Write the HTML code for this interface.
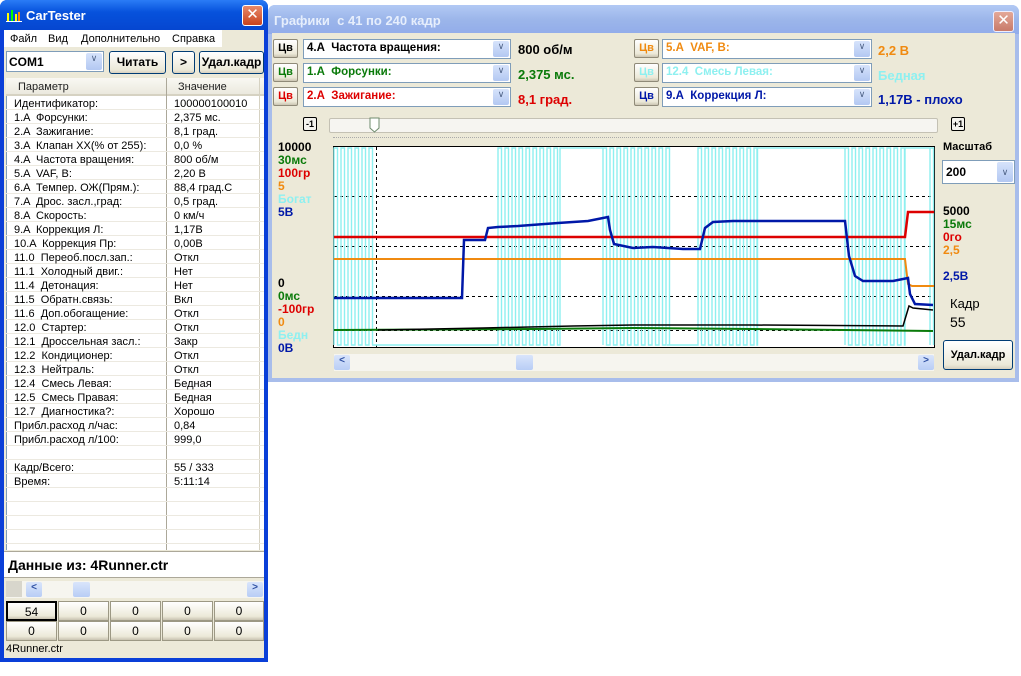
<!DOCTYPE html>
<html><head><meta charset="utf-8">
<style>
*{margin:0;padding:0;box-sizing:border-box}
body{width:1021px;height:676px;background:#fff;position:relative;overflow:hidden;font-family:"Liberation Sans","DejaVu Sans",sans-serif;font-size:11px;color:#000}
.a{position:absolute}
.win1{left:0;top:0;width:268px;height:662px;background:#0a3fd8;border-radius:7px 7px 0 0}
.t1{left:0;top:0;width:268px;height:30px;background:linear-gradient(#2a7cf6,#0752dc 40%,#0546d0);border-radius:7px 7px 0 0;color:#fff;font-weight:bold;font-size:13px;padding:8px 0 0 26px}
.xbtn{width:21px;height:21px;background:linear-gradient(#e8896a,#c9431d);border:1px solid #fff;border-radius:3px;color:#fff;font-weight:bold;font-size:15px;text-align:center;line-height:18px}
.body1{left:4px;top:30px;width:260px;height:628px;background:#ece9d8}
.btn{position:absolute;background:linear-gradient(#fff,#ece9d8 85%,#d6d0c0);border:1px solid #003c74;border-radius:3px;font-weight:bold;font-size:12px;text-align:center}
.combo{position:absolute;background:#fff;border:1px solid #7f9db9}
.dd{position:absolute;right:1px;top:1px;bottom:1px;width:16px;background:linear-gradient(#d6e3fb,#b3c8f2);border-radius:2px;color:#4d6185;font-size:9px;text-align:center}
.cell{position:absolute;height:20px;background:linear-gradient(#fff,#ece9d8 80%,#c8c2b0);border:1px solid #9c9884;text-align:center;line-height:18px;font-size:12px}
.win2{left:268px;top:5px;width:751px;height:377px;background:#a8bdeb;border-radius:7px 7px 0 0}
.t2{left:268px;top:5px;width:751px;height:29px;background:linear-gradient(#b2c9f4,#9cb6ea 50%,#92acea);border-radius:7px 7px 0 0;color:#e6eefc;font-weight:bold;font-size:13px;padding:8px 0 0 6px}
.body2{left:272px;top:33px;width:743px;height:345px;background:#ece9d8}
.cv{position:absolute;width:25px;height:19px;background:linear-gradient(#fff,#ece9d8 80%,#cbc5b2);border:1px solid #8f8a78;border-radius:2px;font-weight:bold;font-size:11px;text-align:center;line-height:17px}
.b{font-weight:bold}
.lbl{position:absolute;font-weight:bold;font-size:12px;line-height:13px}
</style></head><body>

<div class="a win1"></div>
<div class="a t1">CarTester</div>
<svg class="a" style="left:6px;top:8px" width="16" height="15"><rect x="1" y="5" width="2" height="9" fill="#ff0"/><rect x="5" y="2" width="2" height="12" fill="#0f0"/><rect x="9" y="6" width="2" height="8" fill="#ff0"/><rect x="12" y="4" width="2" height="10" fill="#f80"/><rect x="0" y="13" width="16" height="1" fill="#fff"/></svg>
<div class="a xbtn" style="left:242px;top:5px">✕</div>
<div class="a body1"></div>
<div class="a" style="left:4px;top:30px;width:218px;height:17px;background:#fff"></div>
<div class="a" style="left:10px;top:33px">Файл</div>
<div class="a" style="left:48px;top:33px">Вид</div>
<div class="a" style="left:81px;top:33px">Дополнительно</div>
<div class="a" style="left:172px;top:33px">Справка</div>
<div class="combo" style="left:6px;top:51px;width:98px;height:21px"><span class="b" style="position:absolute;left:2px;top:3px;font-size:12px">COM1</span><div class="dd">&#8744;</div></div>
<div class="btn" style="left:109px;top:51px;width:57px;height:23px;line-height:21px">Читать</div>
<div class="btn" style="left:172px;top:51px;width:23px;height:23px;line-height:21px">&gt;</div>
<div class="btn" style="left:199px;top:51px;width:65px;height:23px;line-height:21px">Удал.кадр</div>
<div class="a" style="left:6px;top:78px;width:258px;height:472px;background:#fff;border-left:1px solid #7f9db9"></div>
<div class="a" style="left:6px;top:78px;width:258px;height:18px;background:linear-gradient(#f9f8f3,#ebe9de);border-bottom:2px solid #d6d2c2"></div>
<div class="a" style="left:18px;top:81px;color:#222">Параметр</div>
<div class="a" style="left:178px;top:81px;color:#222">Значение</div>
<div class="a" style="left:166px;top:78px;width:1px;height:472px;background:#aca899"></div>
<div class="a" style="left:259px;top:78px;width:1px;height:472px;background:#d6d2c2"></div>
<svg class="a" style="left:6px;top:96px" width="258" height="454">
<path stroke="#ece9e0" d="M0 13.5H258M0 27.5H258M0 41.5H258M0 55.5H258M0 69.5H258M0 83.5H258M0 97.5H258M0 111.5H258M0 125.5H258M0 139.5H258M0 153.5H258M0 167.5H258M0 181.5H258M0 195.5H258M0 209.5H258M0 223.5H258M0 237.5H258M0 251.5H258M0 265.5H258M0 279.5H258M0 293.5H258M0 307.5H258M0 321.5H258M0 335.5H258M0 349.5H258M0 363.5H258M0 377.5H258M0 391.5H258M0 405.5H258M0 419.5H258M0 433.5H258M0 447.5H258"/>
</svg>
<div class="a" style="left:6px;top:97px;width:258px;font-size:11px;line-height:14px">
<div style="position:absolute;left:8px;top:0;white-space:pre">Идентификатор:
1.A  Форсунки:
2.A  Зажигание:
3.A  Клапан XX(% от 255):
4.A  Частота вращения:
5.A  VAF, B:
6.A  Темпер. ОЖ(Прям.):
7.A  Дрос. засл.,град:
8.A  Скорость:
9.A  Коррекция Л:
10.A  Коррекция Пр:
11.0  Переоб.посл.зап.:
11.1  Холодный двиг.:
11.4  Детонация:
11.5  Обратн.связь:
11.6  Доп.обогащение:
12.0  Стартер:
12.1  Дроссельная засл.:
12.2  Кондиционер:
12.3  Нейтраль:
12.4  Смесь Левая:
12.5  Смесь Правая:
12.7  Диагностика?:
Прибл.расход л/час:
Прибл.расход л/100:

Кадр/Всего:
Время:</div>
<div style="position:absolute;left:168px;top:0;white-space:pre">100000100010
2,375 мс.
8,1 град.
0,0 %
800 об/м
2,20 B
88,4 град.C
0,5 град.
0 км/ч
1,17B
0,00B
Откл
Нет
Нет
Вкл
Откл
Откл
Закр
Откл
Откл
Бедная
Бедная
Хорошо
0,84
999,0

55 / 333
5:11:14</div>
</div>
<div class="a" style="left:4px;top:551px;width:260px;height:27px;background:#fff;border-top:1px solid #aca899;border-bottom:1px solid #aca899"></div>
<div class="a b" style="left:8px;top:557px;font-size:14px">Данные из: 4Runner.ctr</div>
<div class="a" style="left:6px;top:581px;width:258px;height:17px;background:#f6f5ef"></div>
<div class="a" style="left:6px;top:581px;width:16px;height:16px;background:#d8d6cc"></div>
<div class="a" style="left:26px;top:582px;width:16px;height:15px;background:linear-gradient(#d9e5fb,#b8cdf5);border-radius:2px;color:#2d4fa2;font-size:10px;text-align:center;font-weight:bold">&lt;</div>
<div class="a" style="left:73px;top:582px;width:17px;height:15px;background:linear-gradient(#d9e5fb,#b8cdf5);border-radius:2px"></div>
<div class="a" style="left:247px;top:582px;width:16px;height:15px;background:linear-gradient(#d9e5fb,#b8cdf5);border-radius:2px;color:#2d4fa2;font-size:10px;text-align:center;font-weight:bold">&gt;</div>
<div class="cell" style="left:6px;top:601px;width:51px;border:2px solid #000">54</div>
<div class="cell" style="left:58px;top:601px;width:51px">0</div>
<div class="cell" style="left:110px;top:601px;width:51px">0</div>
<div class="cell" style="left:162px;top:601px;width:51px">0</div>
<div class="cell" style="left:214px;top:601px;width:50px">0</div>
<div class="cell" style="left:6px;top:621px;width:51px">0</div>
<div class="cell" style="left:58px;top:621px;width:51px">0</div>
<div class="cell" style="left:110px;top:621px;width:51px">0</div>
<div class="cell" style="left:162px;top:621px;width:51px">0</div>
<div class="cell" style="left:214px;top:621px;width:50px">0</div>
<div class="a" style="left:6px;top:643px">4Runner.ctr</div>

<div class="a win2"></div>
<div class="a t2">Графики&nbsp; с 41 по 240 кадр</div>
<div class="a xbtn" style="left:993px;top:11px;width:21px;background:linear-gradient(#e4a898,#c87a6a);border-color:#eef">✕</div>
<div class="a body2"></div>

<div class="cv" style="left:273px;top:39px;color:#000">Цв</div>
<div class="combo" style="left:303px;top:39px;width:208px;height:20px"><span class="b" style="position:absolute;left:3px;top:2px;font-size:11.5px">4.A&nbsp; Частота вращения:</span><div class="dd">&#8744;</div></div>
<div class="lbl" style="left:518px;top:43px;font-size:13px">800 об/м</div>
<div class="cv" style="left:273px;top:63px;color:#0a7a0a">Цв</div>
<div class="combo" style="left:303px;top:63px;width:208px;height:20px"><span class="b" style="position:absolute;left:3px;top:2px;font-size:11.5px;color:#0a7a0a">1.A&nbsp; Форсунки:</span><div class="dd">&#8744;</div></div>
<div class="lbl" style="left:518px;top:68px;font-size:13px;color:#0a7a0a">2,375 мс.</div>
<div class="cv" style="left:273px;top:87px;color:#d00">Цв</div>
<div class="combo" style="left:303px;top:87px;width:208px;height:20px"><span class="b" style="position:absolute;left:3px;top:2px;font-size:11.5px;color:#d00">2.A&nbsp; Зажигание:</span><div class="dd">&#8744;</div></div>
<div class="lbl" style="left:518px;top:93px;font-size:13px;color:#d00">8,1 град.</div>

<div class="cv" style="left:634px;top:39px;color:#f08a10">Цв</div>
<div class="combo" style="left:662px;top:39px;width:210px;height:20px"><span class="b" style="position:absolute;left:3px;top:2px;font-size:11.5px;color:#f08a10">5.A&nbsp; VAF, B:</span><div class="dd">&#8744;</div></div>
<div class="lbl" style="left:878px;top:44px;font-size:13px;color:#f08a10">2,2 B</div>
<div class="cv" style="left:634px;top:63px;color:#8ef0f0">Цв</div>
<div class="combo" style="left:662px;top:63px;width:210px;height:20px"><span class="b" style="position:absolute;left:3px;top:2px;font-size:11.5px;color:#8ef0f0">12.4&nbsp; Смесь Левая:</span><div class="dd">&#8744;</div></div>
<div class="lbl" style="left:878px;top:69px;font-size:13px;color:#8ef0f0">Бедная</div>
<div class="cv" style="left:634px;top:87px;color:#0018a8">Цв</div>
<div class="combo" style="left:662px;top:87px;width:210px;height:20px"><span class="b" style="position:absolute;left:3px;top:2px;font-size:11.5px;color:#0018a8">9.A&nbsp; Коррекция Л:</span><div class="dd">&#8744;</div></div>
<div class="lbl" style="left:878px;top:93px;font-size:13px;color:#0018a8">1,17B - плохо</div>

<div class="a b" style="left:303px;top:117px;width:14px;height:14px;border:1px solid #000;border-radius:2px;background:#f4f3ee;font-size:9px;text-align:center;line-height:12px">-1</div>
<div class="a" style="left:329px;top:118px;width:609px;height:15px;border:1px solid #c4c1b4;border-radius:2px;background:#f6f5f1"></div>
<svg class="a" style="left:369px;top:117px" width="12" height="17"><path d="M1 1H10V11L5.5 15L1 11Z" fill="#fff" stroke="#6f8c6e"/></svg>
<div class="a" style="left:333px;top:137px;width:600px;border-top:1px dotted #aaa"></div>
<div class="a b" style="left:951px;top:117px;width:14px;height:14px;border:1px solid #000;border-radius:2px;background:#f4f3ee;font-size:9px;text-align:center;line-height:12px">+1</div>

<div class="lbl" style="left:278px;top:141px;line-height:13px">10000<br><span style="color:#0a7a0a">30мс</span><br><span style="color:#d00">100гр</span><br><span style="color:#f08a10">5</span><br><span style="color:#8ef0f0">Богат</span><br><span style="color:#0018a8">5B</span></div>
<div class="lbl" style="left:278px;top:277px;line-height:13px">0<br><span style="color:#0a7a0a">0мс</span><br><span style="color:#d00">-100гр</span><br><span style="color:#f08a10">0</span><br><span style="color:#8ef0f0">Бедн</span><br><span style="color:#0018a8">0B</span></div>

<svg class="a" style="left:333px;top:146px" width="603" height="203">
<rect x="0.5" y="0.5" width="601" height="201" fill="#fff" stroke="#000"/>
<path stroke="#000" stroke-dasharray="3,3" d="M1 50.5H601M1 100.5H601M1 150.5H601M1 184.5H601M43.5 1V201"/>
<polyline id="cy" fill="none" stroke="#8ef0f0" stroke-width="1.4" points=""/>
<polyline fill="none" stroke="#0a7a0a" stroke-width="2" points="1,184 200,183 300,182 420,183 600,185"/>
<polyline fill="none" stroke="#000" stroke-width="1.5" points="45,184 150,182 240,180 300,179 420,179 570,180 576,160 580,162 600,164"/>
<polyline fill="none" stroke="#f08a10" stroke-width="2" points="1,113 572,113 575,138 579,140 601,140"/>
<polyline fill="none" stroke="#d00" stroke-width="2.5" points="1,91 572,91 575,66 579,66 601,66"/>
<polyline fill="none" stroke="#0018a8" stroke-width="2.5" points="1,152 129,152 131,94 152,94 155,82 165,81 185,80 225,77 255,75 275,71 277,84 281,98 300,102 320,101 350,103 367,103 372,82 380,76 400,75 512,75 516,110 522,130 530,135 560,135 575,132 577,148 582,158 600,159"/>
</svg>
<script>
(function(){
var pts=[];var top=2,bot=199;
var segs=[['d',1,39],['l',39,165],['d',165,227],['h',227,270],['d',270,334],['l',334,365],['d',365,424],['h',424,512],['d',512,572],['h',572,597],['d',597,601]];
segs.forEach(function(s){
 if(s[0]=='l'){pts.push(s[1]+','+bot,s[2]+','+bot);}
 else if(s[0]=='h'){pts.push(s[1]+','+bot,s[1]+','+top,s[2]+','+top,s[2]+','+bot);}
 else{for(var x=s[1];x<s[2];x+=7){pts.push(x+','+bot,x+','+top,(x+3.5)+','+top,(x+3.5)+','+bot);}}
});
document.getElementById('cy').setAttribute('points',pts.join(' '));
})();
</script>

<div class="a" style="left:334px;top:354px;width:600px;height:17px;background:#f6f5ef"></div>
<div class="a" style="left:334px;top:355px;width:16px;height:15px;background:linear-gradient(#d9e5fb,#b8cdf5);border-radius:2px;color:#2d4fa2;font-size:10px;text-align:center;font-weight:bold">&lt;</div>
<div class="a" style="left:516px;top:355px;width:17px;height:15px;background:linear-gradient(#d9e5fb,#b8cdf5);border-radius:2px"></div>
<div class="a" style="left:918px;top:355px;width:16px;height:15px;background:linear-gradient(#d9e5fb,#b8cdf5);border-radius:2px;color:#2d4fa2;font-size:10px;text-align:center;font-weight:bold">&gt;</div>

<div class="lbl" style="left:943px;top:141px;font-size:11px">Масштаб</div>
<div class="combo" style="left:942px;top:160px;width:73px;height:24px"><span class="b" style="position:absolute;left:3px;top:4px;font-size:12px">200</span><div class="dd" style="line-height:20px">&#8744;</div></div>
<div class="lbl" style="left:943px;top:205px;line-height:13px">5000<br><span style="color:#0a7a0a">15мс</span><br><span style="color:#d00">0го</span><br><span style="color:#f08a10">2,5</span></div>
<div class="lbl" style="left:943px;top:270px;color:#0018a8">2,5B</div>
<div class="a" style="left:950px;top:296px;font-size:13px">Кадр</div>
<div class="a" style="left:950px;top:314px;font-size:14px">55</div>
<div class="btn" style="left:943px;top:340px;width:70px;height:30px;line-height:28px;font-size:11px">Удал.кадр</div>
</body></html>
